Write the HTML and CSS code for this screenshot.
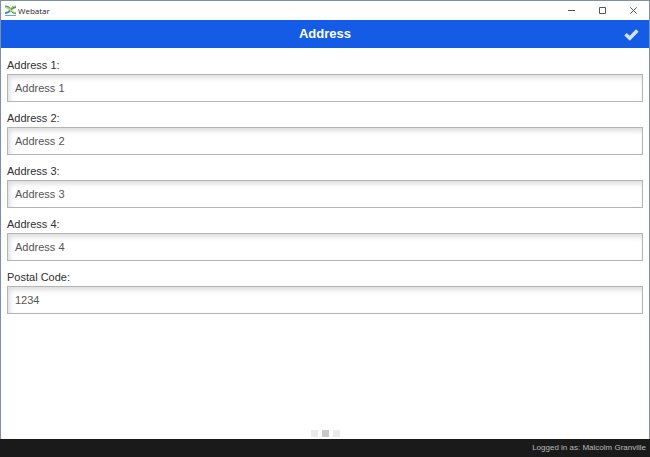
FILE: index.html
```
<!DOCTYPE html>
<html lang="en">
<head>
  <meta charset="UTF-8">
  <title>Webatar</title>
  <meta name="viewport" content="width=device-width, initial-scale=1">
  <link rel="stylesheet" href="styles.css">
</head>
<body>
  <div class="window">
    <div class="titlebar">
      <svg class="logo" viewBox="0 0 11 11" aria-hidden="true">
        <path d="M0 8Q3.500 8 5.500 5T11 2" fill="none" stroke="#2595c9" stroke-width="2"/>
        <path d="M0 2Q3.500 2 5.500 5T11 8" fill="none" stroke="#e3c53a" stroke-width="2"/>
        <path d="M0 .8Q3.500 1 5 3" fill="none" stroke="#2aa0cc" stroke-width="1.200"/>
        <path d="M6 3Q7.500 1 11 .8" fill="none" stroke="#e3c53a" stroke-width="1.200"/>
        <path d="M6.500 6.500Q8 8.500 11 8.800" fill="none" stroke="#2595c9" stroke-width="1"/>
        <path d="M0 10.500H11" stroke="#63a9cf" stroke-width="1"/>
      </svg>
      <span class="app-name">Webatar</span>
      <button class="win-btn" type="button" aria-label="Minimize">
        <svg viewBox="0 0 7 7"><path d="M0 3.500H7"/></svg>
      </button>
      <button class="win-btn" type="button" aria-label="Maximize">
        <svg viewBox="0 0 7 7"><path d="M.5 .5H6.500V6.500H.5Z"/></svg>
      </button>
      <button class="win-btn" type="button" aria-label="Close">
        <svg viewBox="0 0 7 7"><path d="M.3 .3L6.700 6.700M6.700 .3L.3 6.700"/></svg>
      </button>
    </div>
    <header class="header">
      <h1>Address</h1>
      <button class="save" type="submit" form="addressForm" aria-label="Save">
        <svg viewBox="0 0 15 13"><path d="M1.500 6.300L5.800 10.300L13.300 2.500" fill="none" stroke="#d3e1fb" stroke-width="3.600"/></svg>
      </button>
    </header>
    <main>
      <form class="address-form" id="addressForm" autocomplete="off">
        <div class="field">
          <label for="address1">Address 1:</label>
          <input type="text" id="address1" value="Address 1">
        </div>
        <div class="field">
          <label for="address2">Address 2:</label>
          <input type="text" id="address2" value="Address 2">
        </div>
        <div class="field">
          <label for="address3">Address 3:</label>
          <input type="text" id="address3" value="Address 3">
        </div>
        <div class="field">
          <label for="address4">Address 4:</label>
          <input type="text" id="address4" value="Address 4">
        </div>
        <div class="field">
          <label for="postalCode">Postal Code:</label>
          <input type="text" id="postalCode" value="1234">
        </div>
      </form>
      <nav class="pager" aria-label="Pages">
        <button type="button" aria-label="Page 1"></button>
        <button type="button" class="active" aria-label="Page 2"></button>
        <button type="button" aria-label="Page 3"></button>
      </nav>
    </main>
  </div>
  <footer class="status">Logged in as: Malcolm Granville</footer>
</body>
</html>
```
FILE: styles.css
```
* {
  box-sizing: border-box;
}
body {
  min-height: 100vh;
  margin: 0;
  display: flex;
  flex-direction: column;
  font-family: "Liberation Sans", Arial, sans-serif;
  font-size: 11px;
  color: #303030;
  background: #fff;
}
button {
  padding: 0;
  border: none;
  background: none;
  cursor: pointer;
}
.window {
  flex: 1;
  display: flex;
  flex-direction: column;
  border: 1px solid #7f8fa8;
  border-bottom: none;
}
.titlebar {
  display: flex;
  align-items: center;
  height: 19px;
  padding-left: 4px;
}
.logo {
  width: 11px;
  height: 11px;
}
.app-name {
  flex: 1;
  margin-left: 2px;
  font-family: "Open Sans", "Segoe UI", sans-serif;
  font-size: 8px;
  color: #222;
}
.win-btn {
  display: flex;
  align-items: center;
  justify-content: center;
  width: 31px;
  height: 19px;
}
.win-btn svg {
  width: 7px;
  height: 7px;
  fill: none;
  stroke: #555;
}
.header {
  display: grid;
  grid-template-columns: 1fr auto 1fr;
  align-items: center;
  height: 28px;
  padding: 0 10px;
  background: #145ce6;
  color: #fff;
}
h1 {
  grid-column: 2;
  margin: 0;
  font-size: 13px;
  line-height: 16px;
}
.save {
  justify-self: end;
}
.save svg {
  display: block;
  width: 15px;
  height: 13px;
}
main {
  flex: 1;
  display: flex;
  flex-direction: column;
  justify-content: space-between;
  padding: 10px 6px 2px;
}
.address-form {
  display: flex;
  flex-direction: column;
  gap: 9px;
}
.field label {
  display: block;
  line-height: 14px;
  margin-bottom: 2px;
}
.field input {
  display: block;
  width: 100%;
  height: 28px;
  padding: 0 7px;
  border: 1px solid #b4b4b4;
  border-radius: 0;
  background: #fff;
  box-shadow: inset 2px 3px 5px #ddd;
  font-family: inherit;
  font-size: 11px;
  color: #555;
}
.pager {
  display: flex;
  justify-content: center;
  gap: 4px;
}
.pager button {
  width: 7px;
  height: 7px;
  background: #ebebeb;
}
.pager .active {
  background: #c8c8c8;
}
.status {
  padding: 0 4px;
  background: #1a1a1a;
  color: #bbb;
  font-size: 8px;
  line-height: 18px;
  text-align: right;
}
```
